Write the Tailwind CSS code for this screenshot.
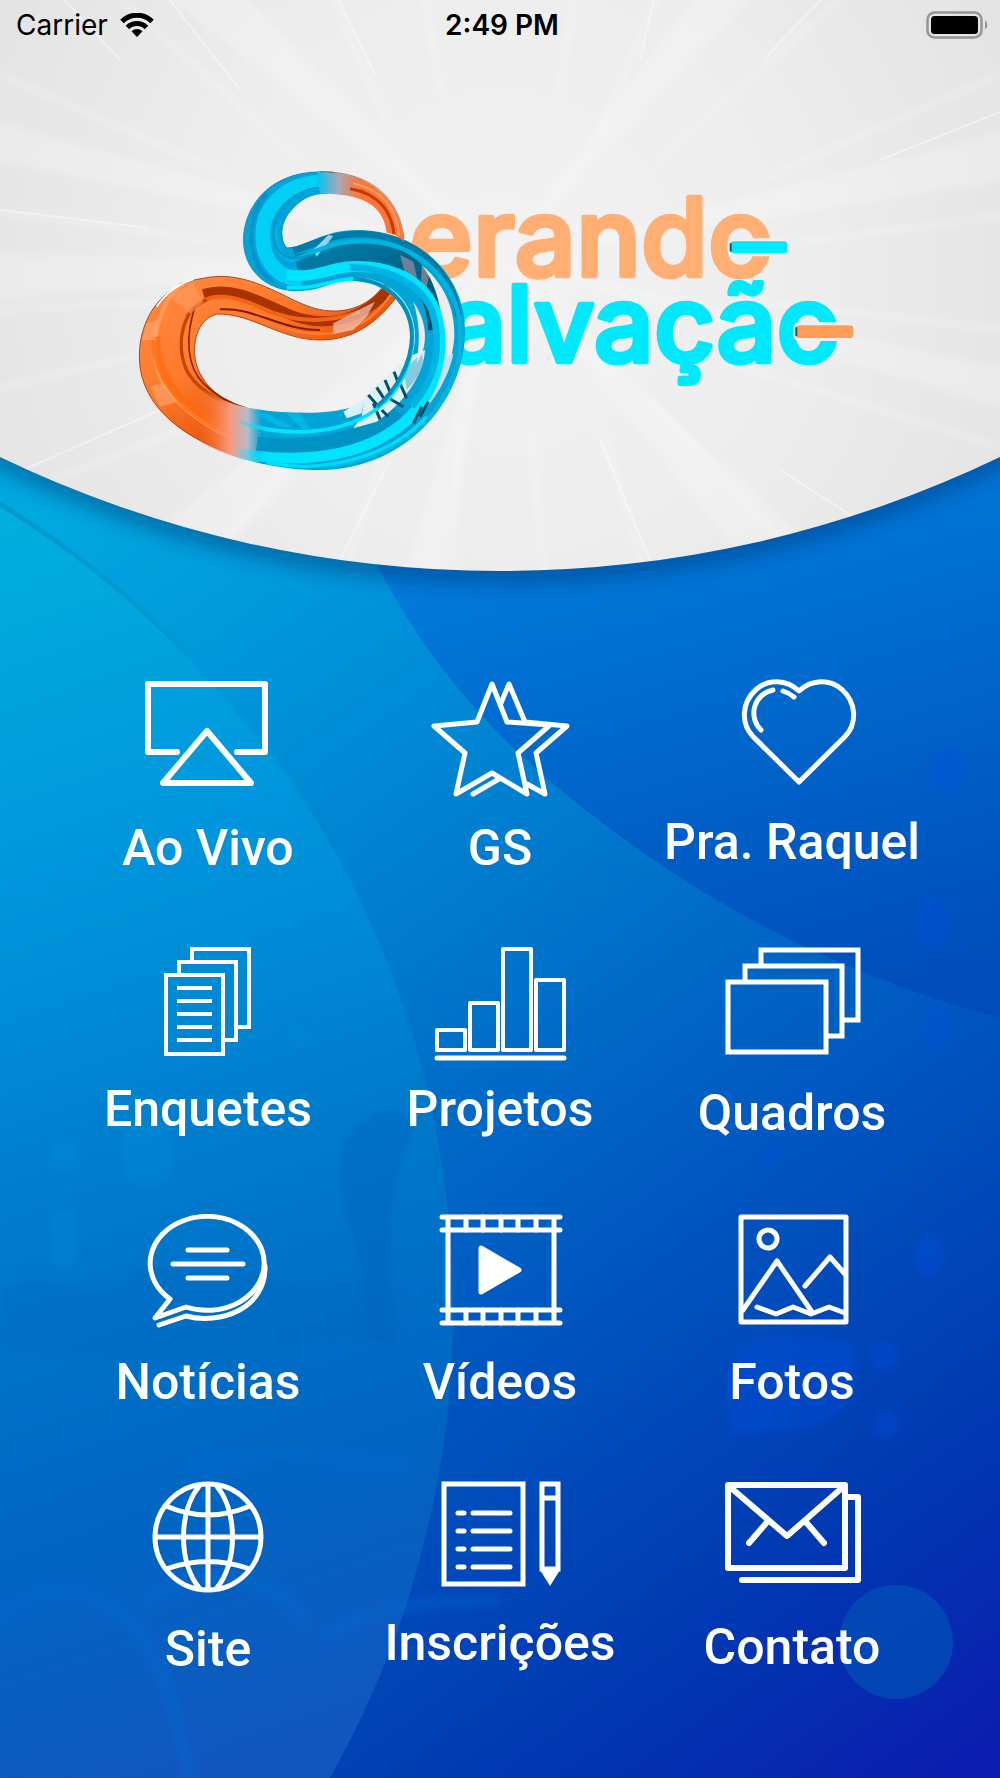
<!DOCTYPE html>
<html lang="pt-BR">
<head>
  <meta charset="UTF-8" />
  <meta name="viewport" content="width=device-width, initial-scale=1.0" />
  <title>Gerando Salvação</title>
  <script src="https://cdn.jsdelivr.net/npm/@tailwindcss/browser@4"></script>
</head>
<body class="bg-[#0038b2]">
  <main class="relative isolate min-h-screen overflow-hidden flex flex-col pb-[30px]">

    <!-- Background -->
    <svg class="absolute inset-0 -z-10 w-full h-full" viewBox="0 0 1000 1778" preserveAspectRatio="none" aria-hidden="true">
      <defs>
        <linearGradient id="base" gradientUnits="userSpaceOnUse" x1="0" y1="560" x2="900" y2="1810">
          <stop offset="0" stop-color="#00a8e0" />
          <stop offset=".2" stop-color="#008fd8" />
          <stop offset=".4" stop-color="#0074ca" />
          <stop offset=".62" stop-color="#0054bf" />
          <stop offset=".82" stop-color="#003ab3" />
          <stop offset="1" stop-color="#0b1eaf" />
        </linearGradient>
        <linearGradient id="left" gradientUnits="userSpaceOnUse" x1="0" y1="480" x2="420" y2="1700">
          <stop offset="0" stop-color="#00b2de" />
          <stop offset=".3" stop-color="#0096dd" />
          <stop offset=".55" stop-color="#007bcc" />
          <stop offset=".8" stop-color="#0065c2" />
          <stop offset="1" stop-color="#1157be" />
        </linearGradient>
        <linearGradient id="right" gradientUnits="userSpaceOnUse" x1="640" y1="500" x2="790" y2="1030">
          <stop offset="0" stop-color="#007cdb" />
          <stop offset=".5" stop-color="#0064c9" />
          <stop offset="1" stop-color="#004cbb" />
        </linearGradient>
        <linearGradient id="rim" gradientUnits="userSpaceOnUse" x1="0" y1="500" x2="340" y2="870">
          <stop offset="0" stop-color="#0084bc" stop-opacity=".5" />
          <stop offset="1" stop-color="#0075b4" stop-opacity="0" />
        </linearGradient>
        <radialGradient id="dome" gradientUnits="userSpaceOnUse" cx="500" cy="270" r="600">
          <stop offset="0" stop-color="#f2f2f2" />
          <stop offset=".5" stop-color="#ededed" />
          <stop offset="1" stop-color="#e2e2e2" />
        </radialGradient>
        <filter id="shade" x="-10%" y="-10%" width="120%" height="130%"><feGaussianBlur stdDeviation="9" /></filter>
        <filter id="soft"><feGaussianBlur stdDeviation="3" /></filter>
        <clipPath id="domeClip"><path d="M0 0H1000V457A1153 1153 0 0 1 0 457Z" /></clipPath>
      </defs>
      <rect width="1000" height="1778" fill="url(#base)" />
      <path d="M365 540C430 680 520 760 600 821C690 890 820 970 1000 1018V400H365Z" fill="url(#right)" />
      <circle cx="-497" cy="1310" r="950" fill="url(#left)" />
      <path d="M0 504A950 950 0 0 1 330 845" fill="none" stroke="url(#rim)" stroke-width="5" />

      <!-- Crowd and stage lights -->
      <g filter="url(#soft)" fill="#0050e0">
        <g fill-opacity=".35">
          <rect x="920" y="898" width="26" height="52" rx="12" />
          <rect x="924" y="1004" width="24" height="48" rx="10" />
          <ellipse cx="948" cy="770" rx="18" ry="22" />
          <ellipse cx="770" cy="1156" rx="12" ry="10" />
          <path d="M735 1350C750 1332 800 1335 850 1342C862 1370 860 1400 830 1418C800 1436 760 1428 732 1436C728 1400 722 1380 735 1350Z" />
          <circle cx="884" cy="1356" r="14" />
          <circle cx="886" cy="1424" r="13" />
          <ellipse cx="930" cy="1256" rx="14" ry="22" />
        </g>
        <path d="M365 1120C330 1140 340 1180 345 1210C352 1240 375 1280 360 1330L395 1350C385 1270 385 1210 405 1150C425 1110 395 1100 365 1120Z" fill="#0055b8" fill-opacity=".25" />
        <path d="M0 1290C60 1260 90 1320 130 1275C170 1250 200 1290 240 1265C300 1300 330 1270 400 1290V1340C300 1330 200 1380 0 1350Z" fill="#0068be" fill-opacity=".3" />
        <g fill="none" stroke="#0070dc" stroke-opacity=".25" stroke-width="14">
          <path d="M0 1620C40 1570 120 1590 150 1650S180 1740 190 1778" />
          <path d="M145 1605C190 1560 280 1570 310 1630" />
          <path d="M320 1640C360 1610 420 1600 500 1600" />
          <path d="M190 1470C260 1440 340 1460 410 1468" />
        </g>
        <g fill="#0090dc" fill-opacity=".3">
          <rect x="50" y="1210" width="26" height="56" rx="8" />
          <rect x="52" y="1140" width="26" height="30" rx="8" />
          <rect x="122" y="1120" width="50" height="66" rx="20" />
          <ellipse cx="300" cy="1036" rx="9" ry="8" />
        </g>
      </g>
      <circle cx="896" cy="1642" r="57" fill="#0058b8" fill-opacity=".6" />

      <!-- White dome with light rays -->
      <path d="M-20 0H1020V457A1153 1153 0 0 1 -20 457Z" fill="#00336e" fill-opacity=".4" transform="translate(0 4)" filter="url(#shade)" />
      <g clip-path="url(#domeClip)">
        <rect width="1000" height="580" fill="url(#dome)" />
        <g stroke="#fff" stroke-opacity=".4" stroke-width="3" filter="url(#soft)">
          <path d="M390 130L330 -10M440 90L424 -10M560 90L575 -10M600 130L660 -10M660 160L850 -10M760 180L1010 70M740 250L1010 215M740 300L1010 330M720 360L1010 450M650 400L800 560M600 420L650 590M530 430L545 590M460 430L450 590M390 430L340 590M330 420L180 590M260 400L0 500M160 350L-10 390M200 300L-10 310M210 240L-10 210M240 180L-10 70M300 160L110 -10" />
        </g>
        <g fill="#fff" fill-opacity=".2" filter="url(#soft)">
          <path d="M500 260L-10 255L-10 300ZM500 260L-10 120L-10 160ZM500 260L160 -10L240 -10ZM500 260L700 -10L760 -10ZM500 260L1010 130L1010 180ZM500 260L1010 370L1010 410ZM500 260L760 580L830 560ZM500 260L400 590L440 590ZM500 260L200 580L120 560Z" />
        </g>
        <g stroke="#fff" stroke-opacity=".4" stroke-width="2">
          <path d="M120 60L60 -5M375 75L334 -10M240 90L166 -5M765 58L826 -5M640 60L655 -5M880 160L1000 112M0 210L150 228M0 480L160 410M340 560L400 440M600 440L650 560M780 470L890 540" />
        </g>
      </g>
    </svg>

    <!-- Status bar -->
    <header class="grid grid-cols-3 items-center h-[50px] pl-4 pr-3 text-black font-[Inter,sans-serif] text-[28px] leading-8">
      <div class="flex items-center gap-3">
        <span>Carrier</span>
        <svg class="w-[34px] h-6" viewBox="0 0 34 24" fill="none" stroke="#000" stroke-width="5" aria-hidden="true">
          <path d="M2 8.500A21 21 0 0 1 32 8.500" />
          <path d="M7.500 14.500A13.500 13.500 0 0 1 26.500 14.500" />
          <path d="M17 24L11.500 18.300A8 8 0 0 1 22.500 18.300Z" fill="#000" stroke="none" />
        </svg>
      </div>
      <time class="text-center font-semibold">2:49 PM</time>
      <svg class="justify-self-end w-[62px] h-7" viewBox="0 0 62 28" aria-label="Bateria">
        <rect x="1.500" y="1.500" width="54" height="25" rx="7" fill="none" stroke="#959595" stroke-width="2.500" />
        <rect x="5" y="5" width="47" height="18" rx="3.500" />
        <path d="M59 9.500C62 11 62 17 59 18.500Z" fill="#959595" />
      </svg>
    </header>

    <!-- Logo -->
    <svg class="w-3/4 mx-auto mt-[100px]" viewBox="15 0 2250 960" role="img" aria-label="Gerando Salvação">
      <defs>
        <linearGradient id="orange" x1="0" y1="0" x2="1" y2="1">
          <stop offset="0" stop-color="#ff8a44" />
          <stop offset=".35" stop-color="#ff7a2c" />
          <stop offset=".6" stop-color="#e85408" />
          <stop offset="1" stop-color="#ff8a48" />
        </linearGradient>
        <linearGradient id="blend" gradientUnits="userSpaceOnUse" x1="235" y1="0" x2="425" y2="0">
          <stop offset="0" stop-color="#ff7a30" stop-opacity="0" />
          <stop offset=".5" stop-color="#f89880" />
          <stop offset=".78" stop-color="#b4bccc" />
          <stop offset="1" stop-color="#00a4d6" />
        </linearGradient>
        <linearGradient id="blendLine" gradientUnits="userSpaceOnUse" x1="340" y1="0" x2="440" y2="0">
          <stop offset="0" stop-color="#00e4ff" stop-opacity="0" />
          <stop offset="1" stop-color="#00e4ff" />
        </linearGradient>
        <linearGradient id="top" gradientUnits="userSpaceOnUse" x1="590" y1="0" x2="720" y2="0">
          <stop offset="0" stop-color="#00c4ee" />
          <stop offset=".5" stop-color="#a8a8b8" />
          <stop offset="1" stop-color="#ff7438" />
        </linearGradient>
        <linearGradient id="teal" x1="0" y1="0" x2="1" y2="1">
          <stop offset="0" stop-color="#0080ac" />
          <stop offset="1" stop-color="#004a68" />
        </linearGradient>
      </defs>

      <g font-family="Inter, sans-serif" font-weight="500" stroke-width="14" stroke-linejoin="round">
        <text x="868" y="378" font-size="325" fill="#ffae74" stroke="#ffae74">erando</text>
        <text x="978" y="636" font-size="318" fill="#00e8fc" stroke="#00e8fc">alvação</text>
      </g>
      <g stroke="#f0f0f0" stroke-width="18" paint-order="stroke">
        <rect x="1832" y="274" width="170" height="36" rx="10" fill="#00e8fc" />
        <rect x="2028" y="526" width="172" height="38" rx="10" fill="#ff9c58" />
      </g>
      <path d="M1832 282V302M2029 534V556" stroke="#075d74" stroke-width="6" stroke-linecap="round" />

      <!-- orange half -->
      <path d="M250 385C340 365 420 400 500 440C580 480 610 483 650 483C720 480 765 445 795 400L830 440C770 520 700 570 600 570C480 570 400 490 290 492C230 510 215 580 228 640C250 720 330 770 420 785L430 940C340 920 60 840 58 620C58 500 130 400 250 385Z" fill="url(#orange)" stroke="#a84a1c" stroke-width="3" />
      <path d="M250 432C340 405 420 455 500 490C580 525 700 535 800 425" fill="none" stroke="#a83300" stroke-width="30" />
      <path d="M200 500C250 420 330 430 420 472C520 520 620 520 720 485" fill="none" stroke="#f46414" stroke-width="12" />
      <path d="M290 486C400 480 470 550 600 552C700 550 770 500 815 430" fill="none" stroke="#ff7a34" stroke-width="7" />
      <path d="M300 478C400 470 480 540 600 540" fill="none" stroke="#7a1e00" stroke-width="6" />
      <path d="M260 450C180 480 165 600 205 670C250 740 330 765 400 785" fill="none" stroke="#c44404" stroke-width="10" />
      <path d="M225 470C195 560 200 650 250 700C290 740 330 760 380 775" fill="none" stroke="#8a2600" stroke-width="5" />
      <path d="M190 400C90 480 90 640 130 700C190 790 290 850 400 890" fill="none" stroke="#ff9a5c" stroke-width="12" />
      <path d="M108 560C105 690 200 790 330 850" fill="none" stroke="#ff6a08" stroke-width="26" stroke-opacity=".7" />
      <path d="M218 396L250 455L212 492L150 440Z" fill="#ff9c62" fill-opacity=".6" />
      <path d="M80 520L115 510L105 570L66 570ZM90 710L130 700L170 755L120 770Z" fill="#ffb080" fill-opacity=".5" />
      <path d="M640 520L720 478L765 455L740 500L700 540L640 552Z" fill="#efc0b0" fill-opacity=".75" />
      <path d="M110 470C140 425 180 400 220 388" fill="none" stroke="#fff" stroke-width="5" />

      <!-- cyan half -->
      <path d="M600 65C450 65 370 170 370 270C370 360 440 423 530 423C620 425 650 380 710 382C800 385 885 450 885 560C880 700 760 788 560 788C460 788 330 780 240 710L190 850C300 920 460 960 600 960C850 960 1035 760 1035 540C1035 380 900 240 710 240C610 240 560 290 500 293C480 270 480 220 510 185C540 150 570 130 620 130L640 66Z" fill="url(#blend)" />
      <path d="M600 65C450 65 370 170 370 270C370 360 440 423 530 423L600 280C560 290 530 295 500 293C480 270 480 220 510 185C540 150 570 130 620 130L640 66Z" fill="#00a4d8" stroke="#05627e" stroke-width="2" stroke-opacity=".5" />
      <path d="M530 345C610 330 650 303 730 305C860 310 950 400 955 540" fill="none" stroke="url(#teal)" stroke-width="62" />
      <path d="M520 303C600 275 640 250 730 252C880 258 1000 360 1015 500" fill="none" stroke="#007ca8" stroke-width="20" />
      <path d="M580 300L625 255L640 258L590 320Z" fill="#8fd4ee" />
      <path d="M840 315L880 335L895 400L855 370ZM905 345L928 370L918 425L903 400Z" fill="#b8949a" fill-opacity=".6" />
      <path d="M610 96C500 96 430 170 428 250C426 330 470 385 545 388" fill="none" stroke="#00d0f6" stroke-width="44" />
      <path d="M472 230C460 290 480 330 520 330C600 300 640 272 740 274C900 280 1022 400 1022 560C1022 760 850 938 600 948" fill="none" stroke="#00b4e0" stroke-width="13" />
      <path d="M620 112C520 110 440 190 465 280C480 330 530 332 570 315" fill="none" stroke="#0098cc" stroke-width="7" />
      <path d="M440 130C370 210 380 350 460 395" fill="none" stroke="#0094ca" stroke-width="12" />
      <path d="M620 124C530 130 470 180 478 250" fill="none" stroke="#00a4d8" stroke-width="12" />

      <!-- upper loop, right side -->
      <path d="M590 65C760 65 840 150 852 275C840 262 820 250 800 248C790 160 720 130 600 131Z" fill="url(#top)" />
      <path d="M690 116C780 130 815 190 822 252" fill="none" stroke="#c23c00" stroke-width="9" />
      <path d="M700 100C790 120 830 180 838 258" fill="none" stroke="#ff9a60" stroke-width="7" />
      <path d="M600 65C760 65 840 150 852 268" fill="none" stroke="#7a4a3c" stroke-width="2" />

      <!-- slits seen between the rails -->
      <path d="M905 345C970 400 1005 470 1003 560C1000 620 975 680 945 730C985 600 975 430 905 345Z" fill="#ececec" />
      <path d="M1000 610C985 700 910 800 850 838C900 770 950 700 960 630Z" fill="#c4e2ee" />

      <path d="M410 885C600 910 740 860 830 780" fill="none" stroke="#008fbe" stroke-width="50" stroke-opacity=".8" />
      <path d="M310 900C500 945 700 930 830 835C950 745 985 600 945 480C900 370 780 345 690 350C620 355 590 385 500 375" fill="none" stroke="url(#blendLine)" stroke-width="32" />
      <path d="M690 352C800 350 900 400 935 480C970 590 945 690 875 770" fill="none" stroke="#00b4e4" stroke-width="20" />
      <path d="M735 735L830 655L865 620L915 600C910 680 850 760 770 815L700 835L725 800Z" fill="#dff0f5" />
      <path d="M745 735L780 775M770 712L800 758M795 690L812 730M822 665L835 700M760 760L780 808M785 780L805 800M800 740L850 770M840 700L860 745M905 770L880 820M925 755L900 800" stroke="#00506e" stroke-width="9" />
      <path d="M850 660L905 610C915 640 900 680 860 720Z" fill="#8cc8de" />
      <path d="M500 412C600 420 640 382 710 388C810 395 876 465 878 560C872 720 760 835 560 845C490 848 420 838 360 815" fill="none" stroke="url(#blendLine)" stroke-width="11" />
      <path d="M700 386C800 390 874 460 876 560C874 640 830 720 770 770" fill="none" stroke="#0090bc" stroke-width="12" />
      <path d="M880 455C925 520 925 590 890 640C900 570 900 520 880 455Z" fill="#ececec" />
      <path d="M400 786L480 832L520 832L440 790ZM500 790L545 835L570 835L540 790Z" fill="#00c0ec" fill-opacity=".7" />
      <path d="M670 785L735 745L725 790L680 805Z" fill="#d8f0f8" />
      <path d="M440 938C600 970 800 930 920 800" fill="none" stroke="#00dcf8" stroke-width="10" />
    </svg>

    <!-- Menu -->
    <nav class="mt-[210px] mx-auto w-full max-w-6xl px-[62px] grid grid-cols-3 auto-rows-[267px] text-white text-center font-[Roboto,sans-serif] font-medium text-[50px] leading-[52px] whitespace-nowrap">
      <a href="#ao-vivo" class="flex flex-col items-center gap-4">
        <svg class="w-[140px] h-[126px]" viewBox="0 0 140 126" fill="none" stroke="currentColor" stroke-width="6" stroke-linecap="round" stroke-linejoin="round">
          <path d="M39 72H10V4H127V72H99" />
          <path d="M69 51L25 103H113Z" />
        </svg>
        <span>Ao Vivo</span>
      </a>
      <a href="#gs" class="flex flex-col items-center gap-4">
        <svg class="w-[140px] h-[126px]" viewBox="0 0 140 126" fill="none" stroke="currentColor" stroke-width="5" stroke-linecap="round" stroke-linejoin="round">
          <path d="M62 4L77 42L120 45L88 73L97 114L62 93L26 114L35 73L4 46L47 42Z" />
          <path d="M71 23L79 4L95 42L137 46L106 73L115 114L97 104M43 114L69 99" />
        </svg>
        <span>GS</span>
      </a>
      <a href="#pra-raquel" class="flex flex-col items-center gap-4">
        <svg class="w-[140px] h-[120px] overflow-visible" viewBox="0 0 140 120" fill="none" stroke="currentColor" stroke-width="5" stroke-linecap="round" stroke-linejoin="round">
          <path d="M77 11C64 -1 46 -1 34 9.500C19 23 19 44 31 56.500L77 102L123 56.500C135 44 135 23 120 9.500C108 -1 90 -1 77 11Z" />
          <path d="M51 10A23.500 23.500 0 0 0 39 50M61 11Q67 13 72 17" />
        </svg>
        <span>Pra. Raquel</span>
      </a>

      <a href="#enquetes" class="flex flex-col items-center gap-4">
        <svg class="w-[140px] h-[120px]" viewBox="0 0 140 120" fill="none" stroke="currentColor" stroke-width="4">
          <path d="M28 28H85V107H28ZM41 28V15H98V93H85M54 15V2H111V80H98" />
          <path d="M39 41H74M39 54H74M39 67H74M39 80H74M39 93H74" />
        </svg>
        <span>Enquetes</span>
      </a>
      <a href="#projetos" class="flex flex-col items-center gap-4">
        <svg class="w-[140px] h-[120px]" viewBox="0 0 140 120" fill="none" stroke="currentColor" stroke-width="4" stroke-linejoin="round" stroke-linecap="round">
          <path d="M7 83H35V103H7ZM40 56H68V103H40ZM73 2H101V103H73ZM106 33H134V103H106Z" />
          <path d="M7 111H134" stroke-width="5" />
        </svg>
        <span>Projetos</span>
      </a>
      <a href="#quadros" class="flex flex-col items-center gap-4">
        <svg class="w-[140px] h-[124px]" viewBox="0 0 140 124" fill="none" stroke="currentColor" stroke-width="5">
          <path d="M6 35H104V105H6ZM23 35V19H120V89H104M39 19V3H136V73H120" />
        </svg>
        <span>Quadros</span>
      </a>

      <a href="#noticias" class="flex flex-col items-center gap-4">
        <svg class="w-[140px] h-[126px]" viewBox="0 0 140 126" fill="none" stroke="currentColor" stroke-width="5" stroke-linecap="round" stroke-linejoin="round">
          <path d="M32 85A57 47 0 1 1 48 93L17 104Z" />
          <path d="M21 111L48 102C82 111 128 95 127 52M50 36H89M35 50H105M50 64H89" />
        </svg>
        <span>Notícias</span>
      </a>
      <a href="#videos" class="flex flex-col items-center gap-4">
        <svg class="w-[140px] h-[126px]" viewBox="0 0 140 126" fill="none" stroke="currentColor" stroke-width="5" stroke-linecap="round" stroke-linejoin="round">
          <path d="M12 3H130M12 16H130M12 96H130M12 109H130M18 3V109M124 3V109" />
          <path d="M36 3V16M53 3V16M71 3V16M88 3V16M106 3V16M36 96V109M53 96V109M71 96V109M88 96V109M106 96V109" />
          <path d="M51 34V78L89 56Z" fill="currentColor" />
        </svg>
        <span>Vídeos</span>
      </a>
      <a href="#fotos" class="flex flex-col items-center gap-4">
        <svg class="w-[140px] h-[126px]" viewBox="0 0 140 126" fill="none" stroke="currentColor" stroke-width="5" stroke-linecap="round" stroke-linejoin="round">
          <path d="M19 3H124V108H19Z" />
          <circle cx="46" cy="25" r="9" />
          <path d="M21 96L55 47L90 98M83 72L108 43L123 60M35 93L54 100L71 93L89 100L107 93L123 99" />
        </svg>
        <span>Fotos</span>
      </a>

      <a href="#site" class="flex flex-col items-center gap-4">
        <svg class="w-[140px] h-[126px]" viewBox="0 0 140 126" fill="none" stroke="currentColor" stroke-width="5">
          <circle cx="70" cy="56" r="53" />
          <path d="M70 3V109M17 56H123M62 4C40 30 40 82 62 108M78 4C100 30 100 82 78 108M28 25Q70 43 112 25M28 88Q70 73 112 88" />
        </svg>
        <span>Site</span>
      </a>
      <a href="#inscricoes" class="flex flex-col items-center gap-4">
        <svg class="w-[140px] h-[120px]" viewBox="0 0 140 120" fill="none" stroke="currentColor" stroke-width="5">
          <path d="M14 3H93V103H14ZM112 3H128V88H112ZM112 17H128" />
          <path d="M28 32H34M43 32H80M28 50H34M43 50H80M28 68H34M43 68H80M28 86H34M43 86H80" stroke-linecap="round" />
          <path d="M110 86H130V89L120 105L110 89Z" fill="currentColor" stroke="none" />
        </svg>
        <span>Inscrições</span>
      </a>
      <a href="#contato" class="flex flex-col items-center gap-4">
        <svg class="w-[140px] h-[124px]" viewBox="0 0 140 124" fill="none" stroke="currentColor" stroke-width="6" stroke-linecap="round" stroke-linejoin="round">
          <path d="M6 4H123V87H6ZM8 6L65 55L121 6M46 40L27 62M83 40L102 62" />
          <path d="M126 16H136V99H20" />
        </svg>
        <span>Contato</span>
      </a>
    </nav>
  </main>
</body>
</html>
